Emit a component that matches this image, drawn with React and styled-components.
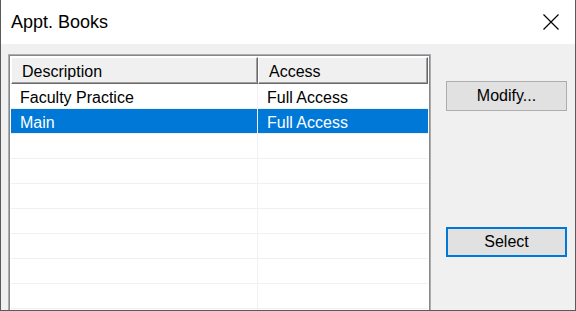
import React from 'react'
import styled, { createGlobalStyle } from 'styled-components'

//--Styles
const GlobalStyle = createGlobalStyle`
  html, body {
    margin: 0;
    padding: 0;
    background: #f0f0f0;
  }
  body {
    font-family: 'Liberation Sans', Arial, sans-serif;
  }
`
const Window = styled.div`
  box-sizing: border-box;
  width: 576px;
  height: 311px;
  border: 1px solid #5a5a5a;
  border-top: none;
  background: #f0f0f0;
  display: flex;
  flex-direction: column;
  overflow: hidden;
`
const TitleBar = styled.header`
  height: 44px;
  flex: none;
  background: #fff;
  display: flex;
  align-items: center;
  justify-content: space-between;
  padding: 0 15px 0 10px;
`
const Title = styled.h1`
  margin: 0;
  font-size: 18px;
  font-weight: normal;
  color: #000;
`
const CloseButton = styled.button`
  width: 18px;
  height: 18px;
  padding: 0;
  border: none;
  background: none;
  display: flex;
  align-items: center;
  justify-content: center;
`
const Body = styled.div`
  flex: 1;
  display: flex;
  gap: 15px;
  padding: 10px 0 0 7px;
  min-height: 0;
`
const ListBox = styled.div`
  box-sizing: border-box;
  width: 423px;
  flex: none;
  height: 300px;
  border: 1px solid #adadad;
  box-shadow: inset 1px 1px 0 #828790, inset -1px 0 0 #828790;
  background: #fff;
  padding: 2px 2px 0 2px;
`
const Row = styled.div`
  display: grid;
  grid-template-columns: 247px 170px;
  height: 25px;
  box-sizing: border-box;
  border-bottom: 1px solid #f0f0f0;
  background: ${(p) => (p.$selected ? '#0078d7' : '#fff')};
  color: ${(p) => (p.$selected ? '#fff' : '#000')};
`
const Cell = styled.div`
  font-size: 16px;
  padding: 3px 0 0 9px;
  display: flex;
  align-items: center;
  white-space: nowrap;
  border-right: ${(p) => (p.$last ? 'none' : '1px solid #f0f0f0')};
`
const HeaderRow = styled.div`
  display: grid;
  grid-template-columns: 247px 170px;
  height: 27px;
`
const HeaderCell = styled.div`
  box-sizing: border-box;
  background: #f0f0f0;
  font-size: 16px;
  padding: 3px 0 0 10px;
  display: flex;
  align-items: center;
  border-top: 1px solid #fff;
  border-left: 1px solid #fff;
  border-right: 1px solid #696969;
  border-bottom: 1px solid #696969;
  box-shadow: inset -1px -1px 0 #a0a0a0;
`
const Side = styled.div`
  display: flex;
  flex-direction: column;
  padding-top: 27px;
  gap: 116px;
`
const Button = styled.button`
  box-sizing: border-box;
  width: 121px;
  height: 30px;
  background: #e1e1e1;
  border: ${(p) => (p.$default ? '2px solid #0078d7' : '1px solid #adadad')};
  font-family: 'Liberation Sans', Arial, sans-serif;
  font-size: 16px;
  color: #000;
  padding: 0;
`

const rows = [
  { desc: 'Faculty Practice', access: 'Full Access' },
  { desc: 'Main', access: 'Full Access', selected: true },
  {}, {}, {}, {}, {}, {}, {}, {},
]

export default function App() {
  return (
    <>
      <GlobalStyle />
      <Window>
        <TitleBar>
          <Title>Appt. Books</Title>
          <CloseButton aria-label="Close">
            <svg width="16" height="16" viewBox="0 0 16 16">
              <path d="M0.5 0.5 L15.5 15.5 M15.5 0.5 L0.5 15.5" stroke="#000" strokeWidth="1.2" fill="none" />
            </svg>
          </CloseButton>
        </TitleBar>
        <Body>
          <ListBox>
            <HeaderRow>
              <HeaderCell>Description</HeaderCell>
              <HeaderCell>Access</HeaderCell>
            </HeaderRow>
            {rows.map((r, i) => (
              <Row key={i} $selected={r.selected}>
                <Cell>{r.desc}</Cell>
                <Cell $last>{r.access}</Cell>
              </Row>
            ))}
          </ListBox>
          <Side>
            <Button>Modify...</Button>
            <Button $default>Select</Button>
          </Side>
        </Body>
      </Window>
    </>
  )
}
